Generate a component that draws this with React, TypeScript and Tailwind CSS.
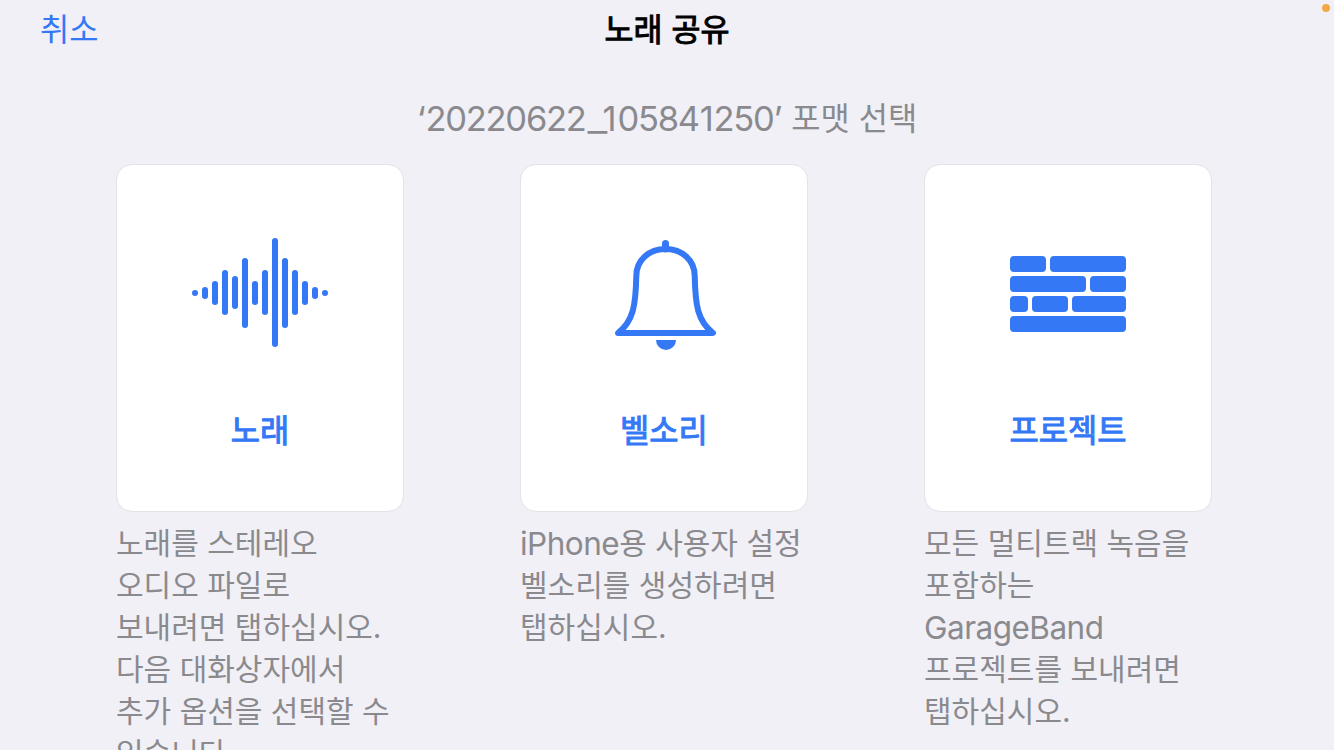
import type { ReactNode } from 'react';

// Rounded bars of the waveform: [top, height], spaced 10px apart.
const bars: [number, number][] = [
  [55, 6], [52, 12], [46, 24], [35, 45], [41, 33], [23, 70], [46, 24],
  [35, 45], [3, 109], [23, 70], [35, 45], [46, 24], [52, 12], [55, 6],
];

// Brick rectangles: [x, y, width].
const bricks: [number, number, number][] = [
  [22, 21, 36], [62, 21, 76],
  [22, 41, 76], [102, 41, 36],
  [22, 61, 18], [44, 61, 36], [84, 61, 54],
  [22, 81, 116],
];

function WaveIcon() {
  return (
    <svg width="160" height="120" viewBox="0 0 160 120" fill="currentColor">
      {bars.map(([y, h], i) => (
        <rect key={i} x={12 + i * 10} y={y} width="6" height={h} rx="3" />
      ))}
    </svg>
  );
}

function BellIcon() {
  return (
    <svg width="160" height="120" viewBox="0 0 160 120" fill="none" stroke="currentColor">
      <path
        d="M52.3 41C52.3 25 65.2 14 81.5 14S110.700 25 110.700 41C111.300 70 113.500 86 129 98H34C49.500 86 51.700 70 52.300 41Z"
        strokeWidth="6"
        strokeLinejoin="round"
      />
      <path d="M81.500 8.500V14" strokeWidth="7" strokeLinecap="round" />
      <path d="M72 105H92A10 10 0 0 1 72 105Z" fill="currentColor" stroke="none" />
    </svg>
  );
}

function BricksIcon() {
  return (
    <svg width="160" height="120" viewBox="0 0 160 120" fill="currentColor">
      {bricks.map(([x, y, w], i) => (
        <rect key={i} x={x} y={y} width={w} height="16" rx="4" />
      ))}
    </svg>
  );
}

function Latin({ children }: { children: ReactNode }) {
  return <span className="align-[-1px] text-[31.5px] leading-none tracking-[-0.52px]">{children}</span>;
}

const formats: { label: string; icon: ReactNode; lines: ReactNode[] }[] = [
  {
    label: '노래',
    icon: <WaveIcon />,
    lines: ['노래를 스테레오', '오디오 파일로', '보내려면 탭하십시오.', '다음 대화상자에서', '추가 옵션을 선택할 수', '있습니다.'],
  },
  {
    label: '벨소리',
    icon: <BellIcon />,
    lines: [<><Latin>iPhone</Latin>용 사용자 설정</>, '벨소리를 생성하려면', '탭하십시오.'],
  },
  {
    label: '프로젝트',
    icon: <BricksIcon />,
    lines: ['모든 멀티트랙 녹음을', '포함하는', <Latin>GarageBand</Latin>, '프로젝트를 보내려면', '탭하십시오.'],
  },
];

export default function App() {
  return (
    <div className="relative h-[750px] w-[1334px] overflow-hidden bg-[#f1f0f6] font-['Inter','Noto_Sans_CJK_KR',sans-serif]">
      <span className="absolute left-[1322px] top-1 size-2 rounded-full bg-[#f2a945]" />
      <header className="grid h-15 grid-cols-3 items-center px-10 text-[31.8px] leading-[60px]">
        <button className="justify-self-start text-[#3478f6]">취소</button>
        <h1 className="justify-self-center whitespace-nowrap text-[31.5px] text-black [-webkit-text-stroke:1px_currentColor]">노래 공유</h1>
      </header>
      <p className="mt-9 h-[68px] whitespace-nowrap text-center text-[31.8px] leading-[46px] text-[#8a8a8e]">
        <span className="align-[-1px] text-[34.5px] leading-none tracking-[-1.25px]">
          <span className="mr-px">‘</span>20220622
          <span className="inline-block w-[17px] origin-left scale-x-[1.26]">_</span>
          <span className="mr-[2px]">1</span>0584
          <span className="mx-px">1</span>250’
        </span>
        <span className="ml-px"> 포맷 선택</span>
      </p>
      <main className="grid grid-cols-[repeat(3,288px)] gap-x-[116px] px-[116px]">
        {formats.map((f) => (
          <section key={f.label}>
            <button className="flex h-[348px] w-full flex-col items-center rounded-2xl border border-[#e3e2e6] bg-white pt-[70px] text-[#3478f6]">
              {f.icon}
              <span className="mt-14 text-[31.8px] leading-10 [-webkit-text-stroke:1px_currentColor]">{f.label}</span>
            </button>
            <p className="mt-2.5 text-[30px] text-[#8a8a8e]">
              {f.lines.map((line, i) => (
                <span key={i} className="block h-[42px] whitespace-nowrap leading-[42px]">{line}</span>
              ))}
            </p>
          </section>
        ))}
      </main>
    </div>
  );
}
